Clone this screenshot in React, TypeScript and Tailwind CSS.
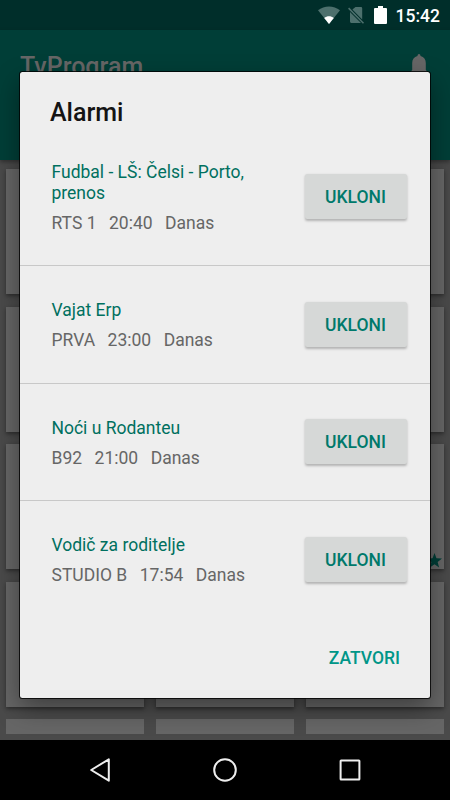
import React from "react";

type Alarm = { title: string; channel: string; time: string; day: string };

const alarms: Alarm[] = [
  { title: "Fudbal - LŠ: Čelsi - Porto, prenos", channel: "RTS 1", time: "20:40", day: "Danas" },
  { title: "Vajat Erp", channel: "PRVA", time: "23:00", day: "Danas" },
  { title: "Noći u Rodanteu", channel: "B92", time: "21:00", day: "Danas" },
  { title: "Vodič za roditelje", channel: "STUDIO B", time: "17:54", day: "Danas" },
];

function StatusBar() {
  return (
    <div className="flex h-[30px] items-center justify-end bg-[#002e2a] pr-[10px]">
      <svg width="22" height="19" viewBox="0 0 22 19" className="mr-[8px]">
        <path d="M0 4.3C6.2-.9 15.8-.9 22 4.3L11 18Z" fill="#4d706d" />
        <path d="M6.2 12C9 9.7 13 9.7 15.8 12L11 18Z" fill="#fff" />
      </svg>
      <svg width="17" height="19" viewBox="0 0 17 19" className="mr-[9px]">
        <path d="M7.5 1H13Q14.2 1 14.2 2.2V13.4L4.4 3.6ZM2 5.9L13 17H3.2Q2 17 2 15.6Z" fill="#4d706d" />
        <path d="M.6 2.1L15.5 17.2" stroke="#4d706d" strokeWidth="1.5" />
      </svg>
      <svg width="13" height="18" viewBox="0 0 13 18" className="mr-[9px]">
        <path d="M4 0H9V2H12Q13 2 13 3V17Q13 18 12 18H1Q0 18 0 17V3Q0 2 1 2H4Z" fill="#fff" />
      </svg>
      <span className="pt-px text-[17.5px] leading-[30px] font-medium text-white">15:42</span>
    </div>
  );
}

function Toolbar() {
  return (
    <div className="relative z-10 flex h-[130px] items-start justify-between bg-[#003e37] pr-[22px] pl-[20px] shadow-[0_2px_4px_rgba(0,0,0,0.35)]">
      <span className="mt-[22px] text-[25px] leading-[30px] font-medium text-[#666]">TvProgram</span>
      <svg width="18" height="24" viewBox="0 0 18 24" className="mt-[24px]">
        <path d="M9 0Q10.4 0 10.6 2C14 3 15.8 5.4 15.8 9V16L18 18.5V20H0V18.5L2.2 16V9C2.2 5.4 4 3 7.4 2Q7.6 0 9 0Z" fill="#666" />
      </svg>
    </div>
  );
}

function ChannelGrid() {
  return (
    <div className="grid h-[580px] grid-cols-3 content-start gap-x-[12px] gap-y-[12.5px] overflow-hidden bg-[#4a4a4a] px-[6px] pt-[9px]">
      {Array.from({ length: 12 }, (_, i) => (
        <div key={i} className="flex h-[125px] items-end justify-end bg-[#666] pr-[2px] pb-[1px] shadow-[0_2px_4px_rgba(0,0,0,0.4)]">
          {i === 8 && (
            <svg width="15" height="15" viewBox="0 0 24 24">
              <path d="M12 0L15.1 8.3L24 8.7L17 14.2L19.4 23L12 18L4.6 23L7 14.2L0 8.7L8.9 8.3Z" fill="#003e37" />
            </svg>
          )}
        </div>
      ))}
      {[0, 1, 2].map((i) => (
        <div key={i} className="h-[14.5px] bg-[#666]" />
      ))}
    </div>
  );
}

function AlarmRow({ alarm }: { alarm: Alarm }) {
  return (
    <div className="flex h-[117.5px] items-center justify-between border-b border-[#c8c8c8] pr-[23px] pl-[31.5px] first:h-[138.5px] last:border-0 last:pb-[1px]">
      <div className="w-[215px] pt-[2.5px] text-[17.5px] leading-[20.5px]">
        <div className="text-[#00705f]">{alarm.title}</div>
        <div className="mt-[9.5px] flex gap-[12.5px] text-[#666]">
          <span>{alarm.channel}</span>
          <span>{alarm.time}</span>
          <span>{alarm.day}</span>
        </div>
      </div>
      <button className="h-[45px] w-[102px] rounded-[2.5px] bg-[#d6d8d7] pt-[1.4px] pr-[1px] text-[17.5px] font-medium text-[#00796b] shadow-[0_1.5px_2.5px_rgba(0,0,0,0.25)]">
        UKLONI
      </button>
    </div>
  );
}

function AlarmDialog() {
  return (
    <div className="absolute top-[72px] left-[20px] z-20 flex h-[625.5px] w-[410px] flex-col rounded-[2.5px] bg-[#eee] shadow-[0_0_0_1px_rgba(0,0,0,0.8),0_10px_26px_rgba(0,0,0,0.4)]">
      <h1 className="h-[55.5px] pt-[26px] pl-[30px] text-[25px] leading-[30px] font-medium text-[#141414]">Alarmi</h1>
      <div>
        {alarms.map((a) => (
          <AlarmRow key={a.title} alarm={a} />
        ))}
      </div>
      <div className="flex flex-1 items-start justify-end pt-[24px] pr-[30px]">
        <button className="text-[17.5px] leading-[30px] font-medium text-[#009688]">ZATVORI</button>
      </div>
    </div>
  );
}

function NavigationBar() {
  return (
    <div className="flex h-[60px] items-center justify-center gap-[101px] bg-black">
      <svg width="24" height="24" viewBox="0 0 24 24" fill="none" stroke="#eee" strokeWidth="2" strokeLinejoin="round">
        <path d="M20.8 1.3V22.7L3.2 12Z" />
      </svg>
      <svg width="24" height="24" viewBox="0 0 24 24" fill="none" stroke="#eee" strokeWidth="2">
        <circle cx="12" cy="12" r="10.8" />
      </svg>
      <svg width="24" height="24" viewBox="0 0 24 24" fill="none" stroke="#eee" strokeWidth="2" strokeLinejoin="round">
        <rect x="2.6" y="2.6" width="18.8" height="18.8" rx=".5" />
      </svg>
    </div>
  );
}

export default function App() {
  return (
    <div className="relative h-[800px] w-[450px] overflow-hidden bg-black font-[Roboto,'Noto_Sans',sans-serif]">
      <div className="h-[740px] overflow-hidden">
        <StatusBar />
        <Toolbar />
        <ChannelGrid />
      </div>
      <NavigationBar />
      <AlarmDialog />
    </div>
  );
}
